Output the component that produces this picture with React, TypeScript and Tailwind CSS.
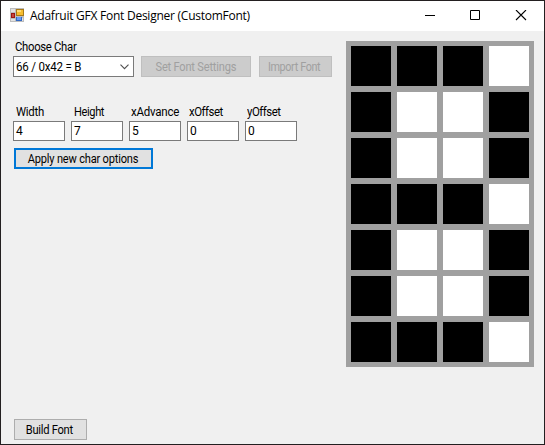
import type { ReactNode } from 'react';

const glyph = ['XXX.', 'X..X', 'X..X', 'XXX.', 'X..X', 'X..X', 'XXX.'];

const fields = [
  { label: 'Width', value: '4', style: 'ml-[3px] tracking-[-0.3px] scale-x-[0.95]' },
  { label: 'Height', value: '7', style: 'ml-[3px] tracking-[-0.4px] scale-x-[0.92]' },
  { label: 'xAdvance', value: '5', style: 'ml-[2px] tracking-[-0.25px] scale-x-[0.96]' },
  { label: 'xOffset', value: '0', style: 'ml-[2px] tracking-[-0.5px] scale-x-[0.95]' },
  { label: 'yOffset', value: '0', style: 'ml-[2px] tracking-[-0.5px] scale-x-[0.95]' },
];

function AppIcon() {
  return (
    <svg width="14" height="14" viewBox="0 0 14 14" shapeRendering="crispEdges">
      <rect width="14" height="14" fill="#bdbdbd" />
      <rect x="1" y="1" width="4" height="3" fill="#e2e2e2" />
      <rect x="1" y="11" width="4" height="2" fill="#e2e2e2" />
      <rect x="12" y="10" width="1" height="3" fill="#e2e2e2" />
      <rect x="1" y="5" width="4" height="5" fill="#9c1712" />
      <rect x="2" y="6" width="2" height="3" fill="#c8453d" />
      <rect x="6" y="1" width="8" height="7" fill="#a97a16" />
      <rect x="7" y="2" width="6" height="5" fill="#f6bd2f" />
      <rect x="7" y="2" width="4" height="2" fill="#ffdc77" />
      <rect x="6" y="9" width="6" height="4" fill="#3268c4" />
      <rect x="7" y="9" width="4" height="3" fill="#6b9df0" />
    </svg>
  );
}

function TitleBar() {
  return (
    <header className="flex h-[30px] shrink-0 items-start bg-white pl-[9px]">
      <div className="mt-[7px]"><AppIcon /></div>
      <h1 className="ml-[6px] mt-[6px] grow whitespace-nowrap font-['Open_Sans','Noto_Sans',sans-serif] text-[12px] leading-[18px] tracking-[-0.25px]">
        Adafruit GFX Font Designer (CustomFont)
      </h1>
      <svg className="mt-[9px] shrink-0" width="119" height="11" viewBox="0 0 119 11" fill="none" stroke="#000">
        <path d="M0 5.5H10" />
        <path d="M45.5 .5H54.5V9.5H45.5Z" />
        <path d="M91 0L101 10M101 0L91 10" strokeWidth="1.1" />
      </svg>
    </header>
  );
}

function Button({ className, textStyle, children }: { className: string; textStyle: string; children: ReactNode }) {
  return (
    <button className={'flex h-[21px] shrink-0 items-center justify-center whitespace-nowrap ' + className}>
      <span className={textStyle}>{children}</span>
    </button>
  );
}

export default function App() {
  return (
    <div className="flex h-[445px] w-[545px] flex-col overflow-hidden border border-[#231f20] bg-[#f0f0f0] font-[Roboto,'Liberation_Sans',sans-serif] text-[12px] leading-[14px] text-black">
      <TitleBar />
      <main className="flex grow items-start">
        <section className="flex h-[413px] w-[345px] flex-col items-start pl-[12px] pt-[9px]">
          <label className="ml-[2px] origin-left scale-x-[0.94] tracking-[-0.3px]">Choose Char</label>
          <div className="mt-[2px] flex">
            <div className="flex h-[21px] w-[121px] items-center justify-between border border-[#7a7a7a] bg-white pl-[2px] pr-[4px]">
              <span className="origin-left scale-x-[0.96] tracking-[-0.2px]">66 / 0x42 = B</span>
              <svg width="9" height="6" viewBox="0 0 9 6" fill="none" stroke="#505050" strokeWidth="1.1">
                <path d="M.5 .7L4.5 4.7L8.5 .7" />
              </svg>
            </div>
            <Button className="ml-[7px] w-[110px] border border-[#bfbfbf] bg-[#cccccc] text-[#a0a0a0]" textStyle="scale-x-[0.92] tracking-[-0.2px]">Set Font Settings</Button>
            <Button className="ml-[8px] w-[73px] border border-[#bfbfbf] bg-[#cccccc] pr-[2px] text-[#a0a0a0]" textStyle="scale-x-[0.9] tracking-[-0.4px]">Import Font</Button>
          </div>
          <div className="mt-[28px] flex gap-[6px]">
            {fields.map((f) => (
              <div key={f.label} className="flex w-[52px] flex-col">
                <label className={'origin-left whitespace-nowrap ' + f.style}>{f.label}</label>
                <div className="mt-[2px] flex h-[20px] items-center border border-[#7a7a7a] bg-white pl-[2px]">{f.value}</div>
              </div>
            ))}
          </div>
          <Button className="ml-px mt-[7px] w-[139px] border-2 border-[#0078d7] bg-[#e1e1e1]" textStyle="scale-x-[0.92] tracking-[-0.2px]">Apply new char options</Button>
          <Button className="mb-[4px] ml-px mt-auto w-[73px] border border-[#adadad] bg-[#e1e1e1] pr-[3px]" textStyle="scale-x-[0.93] tracking-[-0.3px]">Build Font</Button>
        </section>
        <section className="mt-[10px] grid w-[188px] grid-cols-4 gap-[6px] bg-[#a0a0a0] p-[5px]">
          {glyph.flatMap((row, y) =>
            row.split('').map((bit, x) => (
              <div key={y + '-' + x} className={bit === 'X' ? 'h-[40px] bg-black' : 'h-[40px] bg-white'} />
            )),
          )}
        </section>
      </main>
    </div>
  );
}
